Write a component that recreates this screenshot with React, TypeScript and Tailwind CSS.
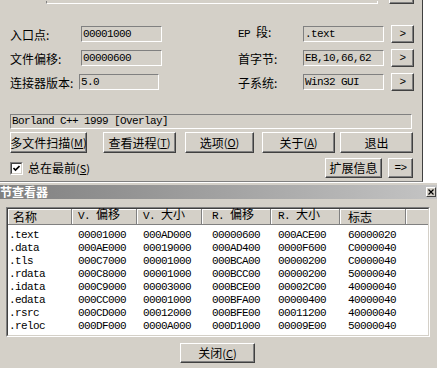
import React from 'react'

const sections = [
  ['.text', '00001000', '000AD000', '00000600', '000ACE00', '60000020'],
  ['.data', '000AE000', '00019000', '000AD400', '0000F600', 'C0000040'],
  ['.tls', '000C7000', '00001000', '000BCA00', '00000200', 'C0000040'],
  ['.rdata', '000C8000', '00001000', '000BCC00', '00000200', '50000040'],
  ['.idata', '000C9000', '00003000', '000BCE00', '00002C00', '40000040'],
  ['.edata', '000CC000', '00001000', '000BFA00', '00000400', '40000040'],
  ['.rsrc', '000CD000', '00012000', '000BFE00', '00011200', '40000040'],
  ['.reloc', '000DF000', '0000A000', '000D1000', '00009E00', '50000040'],
]

// column widths + left padding, measured off the listview
const cols = [
  { w: 'w-[64px]', pad: 'pl-[1px]', hpad: 'pl-[5px]' },
  { w: 'w-[65px]', pad: 'pl-[6px]', hpad: 'pl-[6px]' },
  { w: 'w-[65px]', pad: 'pl-[6px]', hpad: 'pl-[6px]' },
  { w: 'w-[69px]', pad: 'pl-[10px]', hpad: 'pl-[10px]' },
  { w: 'w-[69px]', pad: 'pl-[7px]', hpad: 'pl-[7px]' },
  { w: 'w-[66px]', pad: 'pl-[8px]', hpad: 'pl-[8px]' },
]

function Mono({ children }: { children: React.ReactNode }) {
  return (
    <span className="font-['Liberation_Mono',monospace] text-[11px] tracking-[-0.6px] whitespace-pre">{children}</span>
  )
}

function Cjk({ children, className = '' }: { children: React.ReactNode; className?: string }) {
  return (
    <span className={`font-['Noto_Sans_CJK_SC',sans-serif] text-[12px] leading-none whitespace-pre ${className}`}>{children}</span>
  )
}

function Key({ k }: { k: string }) {
  return (
    <span className="font-['Noto_Sans_CJK_SC',sans-serif] text-[11px]">(<span className="underline">{k}</span>)</span>
  )
}

function Btn({ className = '', children }: { className?: string; children: React.ReactNode }) {
  return (
    <div className={`shrink-0 flex items-center justify-center bg-[#d4d0c8] border border-t-white border-l-white border-r-[#404040] border-b-[#404040] shadow-[inset_-1px_-1px_0_#808080] text-black ${className}`}>
      {children}
    </div>
  )
}

function Field({ className = '', children }: { className?: string; children?: React.ReactNode }) {
  return (
    <div className={`shrink-0 flex items-center border border-t-[#808080] border-l-[#808080] border-r-white border-b-white pl-[1px] overflow-hidden ${className}`}>
      {children}
    </div>
  )
}

function InfoRow({ label, labelW, value, fieldW, gap, rLabel, rValue }: {
  label: React.ReactNode; labelW: string; value: string; fieldW: string; gap: string; rLabel: React.ReactNode; rValue: string
}) {
  return (
    <div className="flex items-center h-[24px]">
      <div className={`${labelW} shrink-0 pl-[10px]`}>{label}</div>
      <Field className={`${fieldW} h-[16px]`}><Mono>{value}</Mono></Field>
      <div className={`${gap} shrink-0`} />
      <div className="w-[65px] shrink-0">{rLabel}</div>
      <Field className="w-[81px] h-[16px]"><Mono>{rValue}</Mono></Field>
      <Btn className="ml-[7px] w-[23px] h-[18px]"><Mono>&gt;</Mono></Btn>
    </div>
  )
}

export default function App() {
  return (
    <div className="w-[437px] h-[368px] overflow-hidden bg-[#d4d0c8] flex flex-col text-black">
      {/* PEiD main window (lower half) */}
      <div className="flex h-[182px]">
        <div className="w-[423px] flex flex-col border-r border-r-[#404040] border-b border-b-[#808080]">
          {/* bottom edges of the file path box and its button */}
          <div className="flex h-[4px] items-end">
            <div className="ml-[46px] w-[332px] h-[3px] border-l border-l-[#808080] border-r border-r-white border-b border-b-white" />
            <div className="ml-[11px] w-[25px] h-[4px] border-l border-l-white border-r border-r-[#404040] border-b border-b-[#404040] shadow-[inset_-1px_-1px_0_#808080]" />
          </div>

          <div className="mt-[18px] flex flex-col">
            <InfoRow
              label={<Cjk>入口点:</Cjk>} labelW="w-[81px]" value="00001000" fieldW="w-[81px]" gap="w-[76px]"
              rLabel={<span className="flex items-baseline"><Mono>EP </Mono><Cjk>段:</Cjk></span>} rValue=".text"
            />
            <InfoRow
              label={<Cjk>文件偏移:</Cjk>} labelW="w-[81px]" value="00000600" fieldW="w-[81px]" gap="w-[76px]"
              rLabel={<Cjk>首字节:</Cjk>} rValue="EB,10,66,62"
            />
            <InfoRow
              label={<Cjk>连接器版本:</Cjk>} labelW="w-[79px]" value="5.0" fieldW="w-[80px]" gap="w-[79px]"
              rLabel={<Cjk>子系统:</Cjk>} rValue="Win32 GUI"
            />
          </div>

          {/* detected packer / compiler */}
          <Field className="mt-[20px] ml-[10px] w-[402px] h-[15px]">
            <Mono>Borland C++ 1999 [Overlay]</Mono>
          </Field>

          <div className="mt-[3px] ml-[10px] flex items-center h-[21px]">
            <Btn className="w-[77px] h-[21px]"><Cjk>多文件扫描</Cjk><Key k="M" /></Btn>
            <Btn className="ml-[16px] w-[73px] h-[21px]"><Cjk>查看进程</Cjk><Key k="T" /></Btn>
            <Btn className="ml-[9px] w-[69px] h-[21px]"><Cjk>选项</Cjk><Key k="O" /></Btn>
            <Btn className="ml-[8px] w-[73px] h-[21px]"><Cjk>关于</Cjk><Key k="A" /></Btn>
            <Btn className="ml-[5px] w-[73px] h-[21px]"><Cjk>退出</Cjk></Btn>
          </div>

          <div className="mt-[5px] ml-[10px] flex items-center h-[20px]">
            <div className="w-[13px] h-[13px] border border-t-[#808080] border-l-[#808080] border-r-white border-b-white">
              <div className="w-full h-full bg-white border border-t-[#404040] border-l-[#404040] border-r-[#d4d0c8] border-b-[#d4d0c8] flex items-center justify-center">
                <svg width="7" height="7" viewBox="0 0 7 7">
                  <polyline points="0.5,3 2.5,5 6.5,1" fill="none" stroke="#000" strokeWidth="1.6" />
                </svg>
              </div>
            </div>
            <Cjk className="ml-[5px]">总在最前</Cjk><Key k="S" />
            <div className="flex-1" />
            <Btn className="w-[57px] h-[20px]"><Cjk>扩展信息</Cjk></Btn>
            <Btn className="ml-[6px] mr-[9px] w-[25px] h-[20px]"><Mono>=&gt;</Mono></Btn>
          </div>
        </div>
        <div className="flex-1 bg-white" />
      </div>

      {/* section viewer window */}
      <div className="flex flex-col flex-1">
        <div className="h-[1px] bg-white" />
        <div className="mt-[2px] h-[14px] flex items-center justify-between bg-linear-to-r from-[#808080] to-[#c4c4c4]">
          <Cjk className="font-bold text-white">节查看器</Cjk>
          <div className="mr-[1px] w-[10px] h-[10px] flex items-center justify-center bg-[#d4d0c8] border border-t-white border-l-white border-r-[#404040] border-b-[#404040]">
            <svg width="6" height="6" viewBox="0 0 6 6">
              <path d="M0.5 0.5L5.5 5.5M5.5 0.5L0.5 5.5" stroke="#000" strokeWidth="1.2" />
            </svg>
          </div>
        </div>

        {/* listview */}
        <div className="mt-[8px] ml-[6px] w-[424px] h-[130px] border border-t-[#808080] border-l-[#808080] border-r-white border-b-white">
          <div className="h-full bg-white border border-t-[#404040] border-l-[#404040] border-r-[#d4d0c8] border-b-[#d4d0c8] flex flex-col">
            <div className="flex h-[16px]">
              {[
                <Cjk>名称</Cjk>,
                <span className="flex items-baseline"><Mono>V. </Mono><Cjk>偏移</Cjk></span>,
                <span className="flex items-baseline"><Mono>V. </Mono><Cjk>大小</Cjk></span>,
                <span className="flex items-baseline"><Mono>R. </Mono><Cjk>偏移</Cjk></span>,
                <span className="flex items-baseline"><Mono>R. </Mono><Cjk>大小</Cjk></span>,
                <Cjk>标志</Cjk>,
              ].map((h, i) => (
                <div
                  key={i}
                  className={`${cols[i].w} ${cols[i].hpad} h-full flex items-center bg-[#d4d0c8] border-r border-b border-r-[#808080] border-b-[#808080] shadow-[inset_1px_1px_0_#fff]`}
                >
                  {h}
                </div>
              ))}
              <div className="flex-1 h-full bg-[#d4d0c8] border-b border-b-[#808080] shadow-[inset_1px_1px_0_#fff]" />
            </div>
            <div className="pt-[2px] flex flex-col">
              {sections.map(row => (
                <div key={row[0]} className="flex h-[13px] items-center">
                  {row.map((cell, i) => (
                    <div key={i} className={`${cols[i].w} ${cols[i].pad} leading-[13px]`}>
                      <Mono>{cell}</Mono>
                    </div>
                  ))}
                </div>
              ))}
            </div>
          </div>
        </div>

        <Btn className="mt-[6px] ml-[180px] w-[75px] h-[20px]"><Cjk>关闭</Cjk><Key k="C" /></Btn>
      </div>
    </div>
  )
}
